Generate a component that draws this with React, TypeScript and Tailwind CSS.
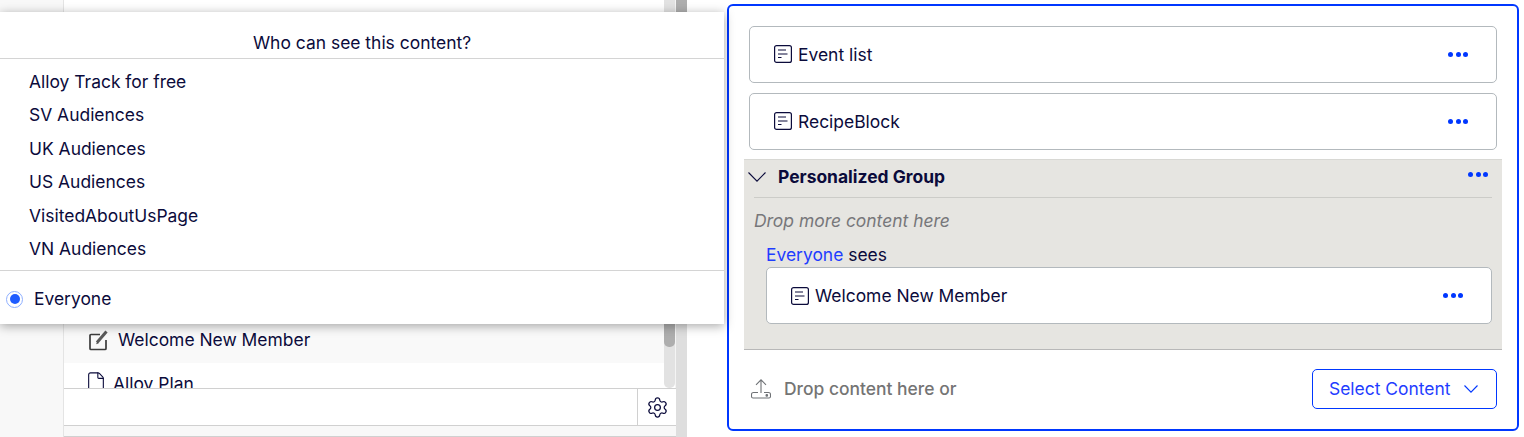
import { File, Settings } from "lucide-react"

const audiences = [
  "Alloy Track for free",
  "SV Audiences",
  "UK Audiences",
  "US Audiences",
  "VisitedAboutUsPage",
  "VN Audiences",
]

function BlockIcon() {
  return (
    <svg width="18" height="18" viewBox="0 0 18 18" fill="none" stroke="#0b0b3b" strokeWidth="1.2" className="shrink-0">
      <rect x="0.6" y="0.6" width="16.8" height="16.8" rx="2" />
      <path d="M4 5H12M4 9H13.5M4 12.5H7.5" />
    </svg>
  )
}

function EditIcon() {
  return (
    <svg width="20" height="21" viewBox="0 0 20 21" fill="none" className="shrink-0">
      <path d="M11 4.5H2a1 1 0 0 0-1 1v13a1 1 0 0 0 1 1h14a1 1 0 0 0 1-1V10" stroke="#3c3c3c" strokeWidth="1.7" />
      <path d="M8 12.5L17.5 1.5" stroke="#5a5a5a" strokeWidth="3" />
      <path d="M7.2 14.2L8 12L9.5 13.2Z" fill="#3c3c3c" />
    </svg>
  )
}

function Chevron({ width, height, color }: { width: number; height: number; color: string }) {
  return (
    <svg width={width} height={height} viewBox={`0 0 ${width} ${height}`} fill="none" stroke={color} strokeWidth="1.1" className="shrink-0">
      <path d={`M0.5 0.5L${width / 2} ${height - 0.8}L${width - 0.5} 0.5`} />
    </svg>
  )
}

function Dots() {
  return (
    <div className="flex gap-[2.5px]">
      <span className="w-[5px] h-[5px] rounded-full bg-[#0037ff]" />
      <span className="w-[5px] h-[5px] rounded-full bg-[#0037ff]" />
      <span className="w-[5px] h-[5px] rounded-full bg-[#0037ff]" />
    </div>
  )
}

function BlockCard({ label }: { label: string }) {
  return (
    <div className="h-[57px] flex items-center justify-between pl-6 pr-[28px] bg-white rounded-[5px] border border-[#b3b9bd]">
      <div className="flex items-center gap-[6px]">
        <BlockIcon />
        <span className="pt-[1px]">{label}</span>
      </div>
      <Dots />
    </div>
  )
}

function UploadIcon() {
  return (
    <svg width="20" height="20" viewBox="0 0 20 20" fill="none" stroke="#6f7276" strokeWidth="1.1" className="shrink-0">
      <path d="M10 14V0.8M5 5.8L10 0.8l5 5" />
      <path d="M7 13.5H2.5a2 2 0 0 0-2 2v2a1.5 1.5 0 0 0 1.5 1.5h16a1.5 1.5 0 0 0 1.5-1.5v-2a2 2 0 0 0-2-2H13" />
      <circle cx="15.8" cy="16.4" r="0.8" fill="#6f7276" />
    </svg>
  )
}

export default function App() {
  return (
    <div
      className="w-[1524px] h-[437px] flex bg-white text-[#0b0b3b] text-[17.45px] overflow-hidden"
      style={{ fontFamily: "Inter, 'Liberation Sans', sans-serif" }}
    >
      {/* Left side: page tree behind the audience popover */}
      <div className="relative w-[727px] shrink-0 flex">
        <div className="w-[64px] shrink-0 bg-[#f8f8f8] border-r border-[#e4e4e4]" />
        <div className="w-[612px] shrink-0 flex flex-col bg-[#f8f8f8]">
          <div className="h-[388px] flex bg-white">
            <div className="flex-1 flex flex-col justify-end overflow-hidden">
              <div className="h-[46px] shrink-0 flex items-center gap-[9px] pl-[25px] bg-[#f9f9f9]">
                <EditIcon />
                <span className="pt-[1px]">Welcome New Member</span>
              </div>
              <div className="h-[25px] shrink-0 flex items-start gap-[6px] pl-[21px] pt-[8px] overflow-hidden">
                <File size={22} strokeWidth={1.2} className="shrink-0" />
                <span className="leading-[26px]">Alloy Plan</span>
              </div>
            </div>
            <div className="w-[11px] shrink-0 flex flex-col bg-[#e2e2e2] rounded-b-[5px]">
              <div className="h-[300px] mt-[47px] bg-[#aeaeae] rounded-b-[5px]" />
            </div>
            <div className="w-[1px] shrink-0 bg-[#f4f4f4]" />
          </div>
          <div className="h-[38px] flex justify-end bg-white border-y border-[#d0d0d0]">
            <div className="w-[39px] flex items-center justify-center border-l border-[#d0d0d0]">
              <Settings size={23} strokeWidth={1.3} />
            </div>
          </div>
          <div className="flex-1 border-b border-[#d0d0d0]" />
        </div>
        <div className="w-[11px] shrink-0 bg-[#dedede]">
          <div className="h-[12px] bg-[#aeaeae]" />
        </div>

        {/* Audience popover */}
        <div className="absolute left-0 top-[12px] w-[724px] h-[312px] flex flex-col bg-white shadow-[0_2px_10px_rgba(0,0,0,0.35)]">
          <div className="h-[47px] shrink-0 flex items-end justify-center pb-[2px] border-b border-[#d4d4d4]">
            Who can see this content?
          </div>
          <div className="h-[212px] shrink-0 flex flex-col pt-[5.5px] pl-[29px] border-b border-[#d4d4d4]">
            {audiences.map((name) => (
              <div key={name} className="h-[33.5px] flex items-center pt-[1px]">
                {name}
              </div>
            ))}
          </div>
          <div className="flex-1 flex items-center gap-[11px] pl-[6px] pt-[3px]">
            <span className="w-[17px] h-[17px] rounded-full border border-[#8fb0ff] flex items-center justify-center">
              <span className="w-[10px] h-[10px] rounded-full bg-[#1f5cff]" />
            </span>
            <span>Everyone</span>
          </div>
        </div>
      </div>

      {/* Right side: content area */}
      <div className="w-[792px] h-[427px] mt-[4px] shrink-0 flex flex-col rounded-[6px] border-2 border-[#0037ff] pt-[20px] px-[15px]">
        <div className="flex flex-col gap-[10px] px-[5px]">
          <BlockCard label="Event list" />
          <BlockCard label="RecipeBlock" />
        </div>
        <div className="h-[191px] mt-[9px] flex flex-col bg-[#e6e5e1] border-t border-[#d8d8d4] border-b border-b-[#b8b8b8]">
          <div className="h-[38px] shrink-0 flex items-start justify-between mx-[10px] pr-[4px] border-b border-[#ccccc8]">
            <div className="flex items-center gap-[12px] -ml-[6px] mt-[4px] font-bold">
              <Chevron width={18} height={10} color="#0b0b3b" />
              <span>Personalized Group</span>
            </div>
            <div className="mt-[12px]">
              <Dots />
            </div>
          </div>
          <div className="pl-[10px] pt-[10px] italic text-[#77777a]">Drop more content here</div>
          <div className="pl-[22px] pt-[9px] leading-[24px]">
            <span className="text-[#1f3dff]">Everyone</span> sees
          </div>
          <div className="pl-[22px] pr-[10px]">
            <BlockCard label="Welcome New Member" />
          </div>
        </div>
        <div className="flex items-center justify-between px-[5px] pt-[19px]">
          <div className="flex items-center gap-[13px] pl-[2px] text-[#747474] font-medium">
            <UploadIcon />
            <span>Drop content here or</span>
          </div>
          <div className="w-[185px] h-[40px] flex items-center pl-[16px] gap-[13px] rounded-[5px] border border-[#0037ff] text-[#1f3dff] bg-white">
            <span className="pt-[1px]">Select Content</span>
            <Chevron width={14} height={8} color="#0037ff" />
          </div>
        </div>
      </div>
    </div>
  )
}
